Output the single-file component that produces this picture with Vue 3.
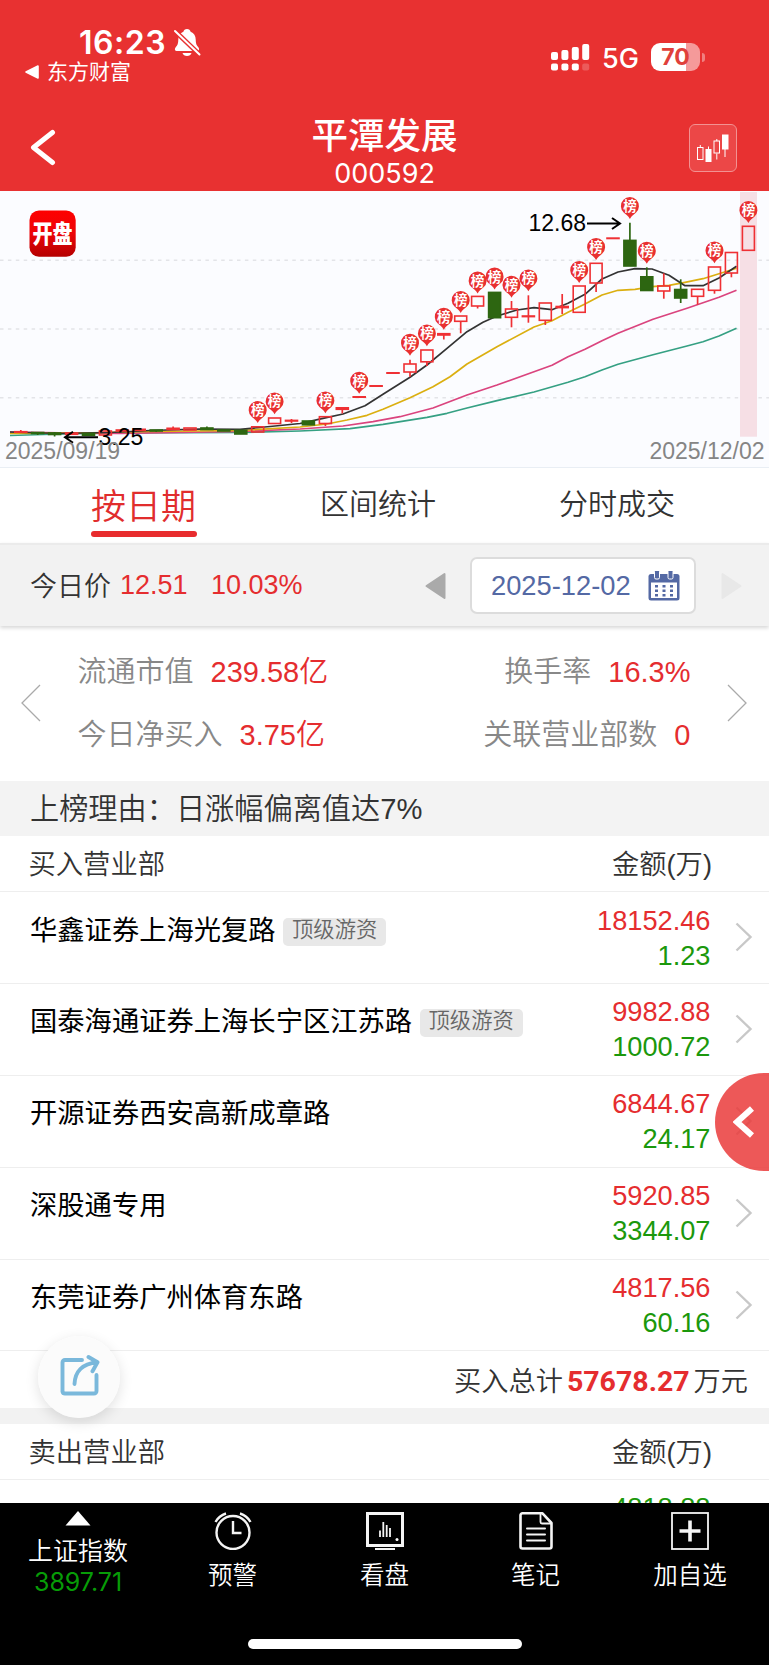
<template>
  <div class="page">
    <header class="header">
      <div class="status">
        <div class="status-left">
          <div class="clock">
            <span>16:23</span>
            <svg width="28" height="29" viewBox="0 0 28 29">
              <path
                d="M14 1c-2 0-3.300 1.300-3.600 2.700C7 5 5.300 7.700 5.300 11.500c0 4-.8 5.800-2.600 7.800-1 1.200-1.300 3.700.8 3.700h21c2.100 0 1.800-2.500.8-3.700-1.800-2-2.600-3.800-2.600-7.800 0-3.800-1.700-6.500-5.100-7.800C17.300 2.300 16 1 14 1z"
                fill="#fff"
              />
              <path d="M9.500 25h9c-.6 1.900-2.200 3-4.500 3s-3.900-1.100-4.500-3z" fill="#fff" />
              <path d="M1.500 2.500 27 27" stroke="#e83131" stroke-width="4.800" />
              <path d="M2 3 26.500 26.500" stroke="#fff" stroke-width="2" stroke-linecap="round" />
            </svg>
          </div>
          <div class="return-app">
            <svg width="14" height="14" viewBox="0 0 14 14">
              <path d="M1 7 13 1v12z" fill="#fff" stroke="#fff" stroke-width="1.600" stroke-linejoin="round" />
            </svg>
            <span>东方财富</span>
          </div>
        </div>
        <div class="status-right">
          <svg width="39" height="28" viewBox="0 0 39 28" fill="#fff">
            <rect x="0" y="9" width="7" height="8" rx="2" />
            <rect x="10.400" y="7" width="7" height="10" rx="2" />
            <rect x="20.800" y="4" width="7" height="13" rx="2" />
            <rect x="31.200" y="1" width="7" height="16" rx="2" />
            <rect x="0" y="20.500" width="7" height="7" rx="2" />
            <rect x="10.400" y="20.500" width="7" height="7" rx="2" />
            <rect x="20.800" y="20.500" width="7" height="7" rx="2" />
            <rect x="31.200" y="20.500" width="7" height="7" rx="2" opacity="0.2" />
          </svg>
          <span class="network">5G</span>
          <span class="battery">70</span>
          <span class="battery-cap"></span>
        </div>
      </div>
      <div class="nav">
        <svg class="back" width="26" height="38" viewBox="0 0 26 38">
          <path
            d="M22.500 3.500 3.500 18.500 22.500 33.500"
            fill="none"
            stroke="#fff"
            stroke-width="5"
            stroke-linecap="round"
            stroke-linejoin="round"
          />
        </svg>
        <div class="title">
          <div class="name">平潭发展</div>
          <div class="code">000592</div>
        </div>
        <div class="kline-btn">
          <svg width="32" height="28" viewBox="0 0 32 28" fill="none" stroke="#fff" stroke-width="1">
            <rect x="0.500" y="13.500" width="5.500" height="12" />
            <path d="M3.300 11v2.500M11.500 12.500V15M19.800 5v2M19.800 19.500V25.500M28 14v9" />
            <rect x="9" y="15.500" width="5" height="12" fill="#fff" />
            <rect x="17" y="7" width="5.500" height="12" />
            <rect x="25.500" y="1" width="5.500" height="14" fill="#fff" />
          </svg>
        </div>
      </div>
    </header>

    <svg class="chart" width="769" height="276" viewBox="0 191 769 276">
      <defs>
        <linearGradient id="logoFill" x1="0" y1="0" x2="0" y2="1">
          <stop offset="0" stop-color="#fe0000" />
          <stop offset="0.500" stop-color="#ec0508" />
          <stop offset="1" stop-color="#b40000" />
        </linearGradient>
      </defs>
      <line
        v-for="y in [260.3, 329, 397.8]"
        :key="y"
        x1="0"
        x2="769"
        :y1="y"
        :y2="y"
        stroke="#e3e4e8"
        stroke-width="1.400"
        stroke-dasharray="3.500 4.400"
      />
      <rect x="740" y="192" width="17" height="244.700" fill="#f6dfe5" />

      <rect x="29.500" y="210.500" width="46.200" height="46.300" rx="9.500" fill="url(#logoFill)" />
      <text transform="translate(52.6 243.200) scale(0.8 1)" class="logo-text">开盘</text>

      <polyline
        v-for="line in lines"
        :key="line.color"
        :points="line.points"
        :stroke="line.color"
        fill="none"
        stroke-width="1.700"
        stroke-linejoin="round"
      />

      <g v-for="c in candles" :key="c.x">
        <line :x1="c.x" :x2="c.x" :y1="c.high" :y2="c.top" :stroke="c.color" stroke-width="1.700" />
        <line :x1="c.x" :x2="c.x" :y1="c.bottom" :y2="c.low" :stroke="c.color" stroke-width="1.700" />
        <rect
          :x="c.x - 6"
          :y="c.top"
          width="12"
          :height="c.bottom - c.top"
          :fill="c.up ? 'none' : c.color"
          :stroke="c.color"
          stroke-width="1.600"
        />
      </g>

      <g v-for="p in pins" :key="p.x" :transform="`translate(${p.x} ${p.y})`">
        <path d="M0 13C-1.800 9.500-4 8.700-6 6.800A9 9 0 1 1 6 6.800C4 8.700 1.800 9.500 0 13z" fill="#e93030" />
        <text x="0" y="5" class="pin-text">榜</text>
      </g>

      <g class="mark">
        <text x="528.500" y="231">12.68</text>
        <path d="M587 223.500h32M612 218l8 5.500-8 5.500" />
        <path d="M98 437.300H66M73 431.800l-8 5.500 8 5.500" />
        <text x="98.500" y="445">3.25</text>
      </g>
      <g class="date-text">
        <text x="5" y="458.700">2025/09/19</text>
        <text x="764.500" y="458.700" text-anchor="end">2025/12/02</text>
      </g>
    </svg>

    <nav class="tabs">
      <div v-for="(t, i) in tabs" :key="t" :class="['tab', { active: i === 0 }]">
        <span>{{ t }}</span>
      </div>
    </nav>

    <div class="price-bar">
      <span class="price-label">今日价</span>
      <span class="price">12.51</span>
      <span class="rate">10.03%</span>
      <svg class="prev" width="21" height="28" viewBox="0 0 21 28">
        <path d="M1.500 14 19.500 2v24z" fill="#aaa" stroke="#aaa" stroke-width="2" stroke-linejoin="round" />
      </svg>
      <div class="date-box">
        <span>2025-12-02</span>
        <svg width="32" height="30" viewBox="0 0 32 30">
          <rect x="0.500" y="3" width="31" height="26.500" rx="2.500" fill="#5469a4" />
          <rect x="3" y="11.500" width="26" height="15.500" fill="#fff" />
          <rect x="6.500" y="-1" width="5" height="9" rx="1.500" fill="#5469a4" stroke="#fff" />
          <rect x="20" y="-1" width="5" height="9" rx="1.500" fill="#5469a4" stroke="#fff" />
          <path d="M7 15.200h3M14.500 15.200h3M22 15.200h3M7 19.700h3M14.500 19.700h3M22 19.700h3M7 24.200h3M14.500 24.200h3M22 24.200h3" stroke="#5469a4" stroke-width="2.600" />
        </svg>
      </div>
      <svg class="next" width="21" height="28" viewBox="0 0 21 28">
        <path d="M19.500 14 1.500 2v24z" fill="#e8e8e8" stroke="#e8e8e8" stroke-width="2" stroke-linejoin="round" />
      </svg>
    </div>

    <section class="stats">
      <svg width="20" height="38" viewBox="0 0 20 38">
        <path d="M19 1 1 19l18 18" fill="none" stroke="#aaa" stroke-width="1.300" />
      </svg>
      <div class="stats-grid">
        <div v-for="s in stats" :key="s.label" class="stat">
          <span>{{ s.label }}</span>
          <b>{{ s.value }}</b>
        </div>
      </div>
      <svg width="20" height="38" viewBox="0 0 20 38">
        <path d="M1 1l18 18L1 37" fill="none" stroke="#aaa" stroke-width="1.300" />
      </svg>
    </section>

    <div class="reason"><span>上榜理由：</span>日涨幅偏离值达7%</div>

    <div class="list-head">
      <span>买入营业部</span>
      <span>金额(万)</span>
    </div>
    <div v-for="r in buyers" :key="r.name" class="row">
      <div class="row-name">
        {{ r.name }}
        <span v-if="r.tag" class="tag">{{ r.tag }}</span>
      </div>
      <div class="amount">
        <div class="red">{{ r.buy }}</div>
        <div class="green">{{ r.sell }}</div>
      </div>
      <svg class="arrow" width="18" height="30" viewBox="0 0 18 30">
        <path d="M1.500 1.500 15.500 15 1.500 28.500" fill="none" stroke="#c8c8c8" stroke-width="2.400" />
      </svg>
    </div>
    <div class="total">买入总计<b>57678.27</b>万元</div>

    <div class="list-head second">
      <span>卖出营业部</span>
      <span>金额(万)</span>
    </div>
    <div class="row">
      <div class="row-name"></div>
      <div class="amount last"><div class="green">4818.88</div></div>
    </div>

    <div class="side-btn">
      <svg width="22" height="32" viewBox="0 0 22 32">
        <path d="M19 2.500 4 16l15 13.500" fill="none" stroke="#fff" stroke-width="6" />
      </svg>
    </div>

    <div class="share-btn">
      <svg width="40" height="42" viewBox="0 0 40 42" fill="none" stroke="#7ab8db" stroke-width="3.900" stroke-linecap="round" stroke-linejoin="round">
        <path d="M22 6H5a2.500 2.500 0 0 0-2.500 2.500v29A2.500 2.500 0 0 0 5 39.500h29a2.500 2.500 0 0 0 2.500-2.500V21" />
        <path d="M14.500 30C15 18 22 9.500 37 8.500M28.500 3l9 5.300-5 9" />
      </svg>
    </div>

    <footer class="tabbar">
      <div class="index">
        <svg width="26" height="15" viewBox="0 0 26 15"><path d="M13 0 25.500 14.500H.5z" fill="#fff" /></svg>
        <div class="index-name">上证指数</div>
        <div class="index-value">3897.71</div>
      </div>
      <div class="bar-item">
        <svg width="38" height="38" viewBox="0 0 38 38" fill="none" stroke="#f4f4f4" stroke-width="2.400">
          <circle cx="19" cy="20.500" r="16.500" />
          <path d="M19 9v12h8.500M1.500 10C4 5.500 7 3 12 1.500M36.500 10C34 5.500 31 3 26 1.500" />
        </svg>
        <span>预警</span>
      </div>
      <div class="bar-item">
        <svg width="38" height="38" viewBox="0 0 38 38" fill="none" stroke="#f4f4f4" stroke-width="3">
          <rect x="1.500" y="1.500" width="35" height="32" />
          <path d="M9 37h20" stroke-width="2" />
          <path d="M14 25V18.500M17.300 25V10M20.700 25V13M24 25V16" stroke-width="1.800" />
          <circle cx="31" cy="27.500" r="1.500" fill="#fff" stroke="none" />
        </svg>
        <span>看盘</span>
      </div>
      <div class="bar-item">
        <svg width="38" height="38" viewBox="0 0 38 38" fill="none" stroke="#f4f4f4" stroke-width="2.600" stroke-linejoin="round">
          <path d="M25.500 1.300H5.500a2 2 0 0 0-2 2V34.500a2 2 0 0 0 2 2H32.500a2 2 0 0 0 2-2V11z" />
          <path d="M23.500 1.500V10a1.500 1.500 0 0 0 1.500 1.500H34" stroke-width="1.800" />
          <path d="M10 16.500h18M10 22.500h18M10 28.500h18" stroke-width="2" stroke-linecap="round" />
        </svg>
        <span>笔记</span>
      </div>
      <div class="bar-item">
        <svg width="38" height="38" viewBox="0 0 38 38" fill="none" stroke="#f4f4f4">
          <rect x="1" y="1" width="36" height="36" stroke-width="1.800" />
          <path d="M19 8.500v21M8.500 19h21" stroke-width="3.600" />
        </svg>
        <span>加自选</span>
      </div>
      <div class="home-line"></div>
    </footer>
  </div>
</template>

<script setup>
const tabs = ['按日期', '区间统计', '分时成交']

const stats = [
  { label: '流通市值', value: '239.58亿' },
  { label: '换手率', value: '16.3%' },
  { label: '今日净买入', value: '3.75亿' },
  { label: '关联营业部数', value: '0' },
]

const buyers = [
  { name: '华鑫证券上海光复路', tag: '顶级游资', buy: '18152.46', sell: '1.23' },
  { name: '国泰海通证券上海长宁区江苏路', tag: '顶级游资', buy: '9982.88', sell: '1000.72' },
  { name: '开源证券西安高新成章路', buy: '6844.67', sell: '24.17' },
  { name: '深股通专用', buy: '5920.85', sell: '3344.07' },
  { name: '东莞证券广州体育东路', buy: '4817.56', sell: '60.16' },
]

const xAt = (i) => Math.round((20.8 + i * 16.92) * 10) / 10

// [上涨, 最高, 实体上沿, 实体下沿, 最低]
const bars = [
  [1, 430, 431.7, 432.3, 433],
  [0, 432, 432.5, 433.5, 435],
  [0, 432, 433, 434.5, 436.5],
  [1, 433, 433, 434.3, 434.5],
  [0, 433, 433.5, 435.3, 436],
  [1, 430.5, 431, 435, 435],
  [1, 430, 430, 431, 431],
  [1, 429, 429.3, 430.3, 431],
  [0, 430, 430, 431, 432],
  [1, 426.5, 428.3, 429.5, 430],
  [1, 428, 428, 430, 430],
  [0, 426.5, 428, 429.5, 430],
  [0, 430, 430, 431, 431],
  [0, 430, 430.3, 434, 434],
  [1, 426.8, 426.8, 432, 432],
  [1, 418, 418, 423.5, 423.5],
  [1, 419, 420.4, 421, 423],
  [0, 421, 421, 424.8, 424.8],
  [1, 416.7, 416.7, 423.5, 426],
  [1, 407, 407.8, 409.3, 413.5],
  [1, 397, 396.8, 397.2, 397],
  [1, 386, 385.8, 386.2, 386],
  [1, 373, 372.8, 373.2, 373],
  [1, 359.7, 364, 372, 376.7],
  [1, 350, 350, 361.8, 366],
  [1, 333.5, 333.7, 335, 339.5],
  [1, 316, 316, 321.3, 333.3],
  [1, 296.4, 296.4, 306, 308.5],
  [0, 292.4, 292.4, 317.7, 317.7],
  [1, 301, 309, 317.3, 327.3],
  [1, 295.3, 316, 316.6, 322.7],
  [1, 303, 303, 320.3, 325],
  [1, 294, 306.5, 307.6, 314],
  [1, 286, 286, 312.3, 312.3],
  [1, 263.3, 263.3, 283, 292],
  [1, 238.3, 238.1, 238.5, 238.3],
  [0, 222.7, 240.4, 266, 266],
  [0, 267.3, 276.8, 290.5, 290.5],
  [1, 273.3, 286, 291, 298.7],
  [0, 279.3, 289.5, 298, 303],
  [1, 289.3, 289.3, 296.3, 304.7],
  [1, 267, 267, 290.3, 293.7],
  [1, 252.5, 252.5, 273, 277.3],
  [1, 226.3, 226.3, 250.3, 250.3],
]
const candles = bars.map(([up, high, top, bottom, low], i) => ({
  x: xAt(i),
  up,
  high,
  top,
  bottom,
  low,
  color: up ? '#ef3034' : '#2d6611',
}))

const pins = [
  [14, 410], [15, 401.3], [18, 400.3], [20, 380.7], [23, 342.7], [24, 333.3],
  [25, 316.7], [26, 300], [27, 280.5], [28, 276.5], [29, 284.7], [30, 278.3],
  [33, 270], [34, 247], [36, 206], [37, 250.7], [41, 250.3], [43, 210],
].map(([i, y]) => ({ x: xAt(i), y }))

const lines = [
  {
    color: '#35a083',
    points: '10,435.500 60,434 120,433 240,432.500 300,431 350,428.700 383,424.300 427,417.300 447,413.300 467,408 497,400.700 534,392 568,382.300 585,376.700 602,370 618,364.300 653,354.700 687,346 703,341.700 719,336 736.500,328.300',
  },
  {
    color: '#da447e',
    points: '10,432 60,432.800 120,433.300 240,431.500 300,429 343,426 373,421.700 400,416.700 433,408 467,395 497,385 534,371.700 552,365.300 568,356.700 585,349.300 602,340.700 618,333.300 653,319.300 687,308.300 719,297.300 736.500,290.300',
  },
  {
    color: '#dbaf10',
    points: '10,433.500 80,433 150,431.500 240,430.500 300,427 327,424 347,420 367,415.300 383,409.300 410,397.700 433,386.700 450,376.700 467,364 497,346.700 534,327 552,320.700 568,312.300 585,304 602,295 618,290.300 635,289.300 652,286.700 669,285.300 685,282.300 703,278.700 736.500,268.300',
  },
  {
    color: '#333',
    points: '10,432 60,433.500 110,432.500 150,430.500 200,429 240,429.300 270,426.500 300,423.500 323,418.300 343,414 365,405.700 383,394.300 410,377.300 427,365 447,348.300 467,331.700 483,322.300 497,316 517,310 534,307.700 552,309.700 568,303.300 585,294.300 602,279 618,272 635,268.700 652,269 669,275.300 685,285.700 703,285.700 719,278 736.500,266.300',
  },
]
</script>

<style>
body {
  margin: 0;
}
</style>

<style scoped>
.page {
  position: relative;
  width: 769px;
  height: 1665px;
  overflow: hidden;
  background: #fff;
  color: #333;
  font-family: 'Liberation Sans', 'Noto Sans CJK SC', sans-serif;
  font-weight: 350;
}

svg {
  display: block;
  flex-shrink: 0;
}

.header {
  height: 191px;
  background: #e83131;
  color: #fff;
}

.status {
  height: 100px;
  display: flex;
  justify-content: space-between;
}

.status-left {
  padding: 23px 0 0 25px;
}

.clock {
  display: flex;
  align-items: center;
  gap: 8px;
  height: 39px;
  padding-left: 54px;
  font-family: Inter, sans-serif;
  font-size: 32px;
  font-weight: 600;
  letter-spacing: 0.5px;
}

.clock svg {
  margin-left: -1px;
}

.return-app {
  display: flex;
  align-items: center;
  gap: 8px;
  height: 20px;
  font-size: 21px;
  line-height: 20px;
  font-weight: 400;
}

.status-right {
  display: flex;
  align-items: center;
  height: 28px;
  padding: 43px 64px 0 0;
  font-family: Inter, sans-serif;
}

.network {
  margin-left: 12px;
  padding-top: 2px;
  width: 49px;
  font-size: 27px;
  font-weight: 500;
}

.battery {
  width: 49px;
  height: 28px;
  border-radius: 9px;
  background: linear-gradient(90deg, #fff 71%, #f59a9a 71%);
  color: #e0403a;
  font-size: 23px;
  font-weight: 700;
  line-height: 29px;
  text-align: center;
}

.battery-cap {
  width: 3px;
  height: 9px;
  margin-left: 2px;
  border-radius: 0 4px 4px 0;
  background: #f08080;
}

.nav {
  display: grid;
  grid-template-columns: 80px 1fr 80px;
  height: 91px;
}

.back {
  margin: 29px 0 0 30px;
}

.title {
  padding-top: 13px;
  text-align: center;
}

.name {
  height: 47px;
  font-size: 36.500px;
  line-height: 48px;
  font-weight: 500;
}

.code {
  font-family: Inter, sans-serif;
  font-size: 27px;
  line-height: 28px;
  font-weight: 400;
}

.kline-btn {
  display: flex;
  align-items: center;
  justify-content: center;
  box-sizing: border-box;
  width: 48px;
  height: 48px;
  margin-top: 24px;
  border: 1px solid #f29292;
  border-radius: 6px;
  background: #ec4747;
}

.chart {
  background: #fbfcff;
  border-bottom: 1px solid #e9eef4;
}

.logo-text {
  font-family: 'Noto Sans CJK SC', sans-serif;
  font-size: 25px;
  font-weight: 900;
  fill: #fff;
  text-anchor: middle;
}

.pin-text {
  font-family: 'Noto Sans CJK SC', sans-serif;
  font-size: 13.500px;
  font-weight: 700;
  fill: #fff;
  text-anchor: middle;
}

.mark text {
  font-size: 23px;
  fill: #000;
}

.mark path {
  fill: none;
  stroke: #000;
  stroke-width: 2;
}

.date-text {
  font-size: 23px;
  fill: #858585;
}

.tabs {
  display: grid;
  grid-template-columns: 287px 181px 299px;
  height: 75px;
}

.tab {
  display: flex;
  justify-content: center;
  font-size: 29px;
  line-height: 74px;
}

.tab:nth-child(2) {
  justify-content: flex-end;
  padding-right: 32px;
}

.tab:nth-child(3) {
  padding-right: 1px;
}

.active {
  color: #e12d2d;
  font-size: 35px;
}

.active span {
  position: relative;
  height: 74px;
  line-height: 77px;
}

.active span::after {
  content: '';
  position: absolute;
  left: 0;
  bottom: 5px;
  width: 106px;
  height: 6px;
  border-radius: 3px;
  background: #e82c2e;
}

.price-bar {
  position: relative;
  display: flex;
  align-items: center;
  box-sizing: border-box;
  height: 83px;
  padding-left: 30px;
  background: #f2f2f2;
  border-top: 2px solid #ebebeb;
  box-shadow: 0 2px 4px rgba(0, 0, 0, 0.16);
  font-size: 27px;
}

.price-label {
  margin-top: -2px;
}

.price,
.rate {
  color: #e52d2f;
}

.price {
  width: 91px;
  margin-left: 9px;
}

.rate {
  width: 214px;
}

.date-box {
  display: flex;
  align-items: center;
  box-sizing: border-box;
  width: 226px;
  height: 57px;
  margin: 0 25px 0 24px;
  padding-left: 19px;
  gap: 17px;
  border: 2px solid #dcdcdc;
  border-radius: 7px;
  background: #fff;
  color: #5469a4;
  font-size: 27.300px;
}

.stats {
  display: flex;
  align-items: center;
  justify-content: space-between;
  height: 155px;
  padding: 0 22px 0 21px;
}

.stats > svg {
  margin-top: -2px;
}

.stats-grid {
  display: grid;
  grid-template-columns: 1fr 1fr;
  align-content: center;
  width: 613px;
  height: 126px;
}

.stat {
  height: 63px;
  font-size: 29px;
  line-height: 63px;
  color: #888;
}

.stat:nth-child(even) {
  text-align: right;
}

.stat b {
  margin-left: 17px;
  color: #e52d2f;
  font-weight: 350;
}

.stat span + b {
  word-spacing: 0;
}

.stat {
  word-spacing: -8px;
}

.reason {
  height: 55px;
  padding-left: 30px;
  background: #f3f3f3;
  font-size: 29.200px;
  line-height: 56px;
}

.list-head {
  display: flex;
  justify-content: space-between;
  box-sizing: border-box;
  height: 56px;
  padding: 0 57px 0 28.500px;
  border-bottom: 1px solid #eee;
  font-size: 27.300px;
  line-height: 57px;
}

.second {
  border-top: 16px solid #f2f2f2;
  height: 72px;
}

.row {
  display: flex;
  justify-content: space-between;
  box-sizing: border-box;
  height: 91.900px;
  padding: 0 16.500px 0 30px;
  border-bottom: 1px solid #eee;
}

.row-name {
  display: flex;
  flex: 1;
  height: 40px;
  padding-top: 18.500px;
  color: #000;
  font-size: 27.300px;
  line-height: 40px;
  font-weight: 400;
}

.tag {
  width: 103px;
  height: 28px;
  margin: 7px 0 0 7.500px;
  border-radius: 5px;
  background: #e8e8e8;
  color: #666;
  font-size: 21.300px;
  line-height: 25px;
  text-align: center;
  font-weight: 350;
}

.amount {
  width: 150px;
  padding-top: 10.500px;
  margin-right: 24px;
  font-size: 27.200px;
  line-height: 35px;
  text-align: right;
}

.last {
  margin-right: 42px;
}

.red {
  color: #e52d2f;
}

.green {
  color: #1b980c;
}

.arrow {
  margin-top: 30px;
}

.total {
  height: 56.500px;
  padding-right: 21px;
  font-size: 27.200px;
  line-height: 61px;
  text-align: right;
}

.total b {
  margin: 0 4px;
  color: #e52d2f;
  font-family: Roboto, sans-serif;
  font-size: 28.500px;
  line-height: 1;
  font-weight: 700;
}

.side-btn {
  position: absolute;
  top: 1072.500px;
  right: 0;
  display: flex;
  align-items: center;
  box-sizing: border-box;
  width: 54.500px;
  height: 98px;
  padding-left: 18px;
  border-radius: 49px 0 0 49px;
  background: rgba(234, 60, 60, 0.86);
}

.share-btn {
  position: absolute;
  top: 1336px;
  left: 38px;
  display: flex;
  align-items: center;
  justify-content: center;
  width: 82px;
  height: 82px;
  border-radius: 50%;
  background: rgba(251, 251, 251, 0.97);
  box-shadow: 0 4px 14px rgba(0, 0, 0, 0.12);
}

.share-btn svg {
  margin: -4px 0 0 1px;
}

.tabbar {
  position: absolute;
  left: 0;
  bottom: 0;
  display: grid;
  grid-template-columns: 156px 153px 151px 151px 158px;
  grid-template-rows: 135px 27px;
  width: 769px;
  height: 162.500px;
  background: #000;
  color: #fff;
}

.index,
.bar-item {
  display: flex;
  flex-direction: column;
  align-items: center;
}

.index {
  padding-top: 8px;
}

.index-name {
  margin-top: 8px;
  font-size: 25px;
  line-height: 34px;
}

.index-value {
  color: #079c07;
  font-family: Inter, sans-serif;
  font-size: 25px;
  line-height: 29px;
  font-weight: 400;
}

.bar-item {
  gap: 8px;
  padding-top: 9px;
  font-size: 24.500px;
  line-height: 36px;
}

.home-line {
  grid-column: 1 / -1;
  justify-self: center;
  width: 274px;
  height: 10px;
  margin-top: 1px;
  border-radius: 5px;
  background: #fff;
}
</style>
